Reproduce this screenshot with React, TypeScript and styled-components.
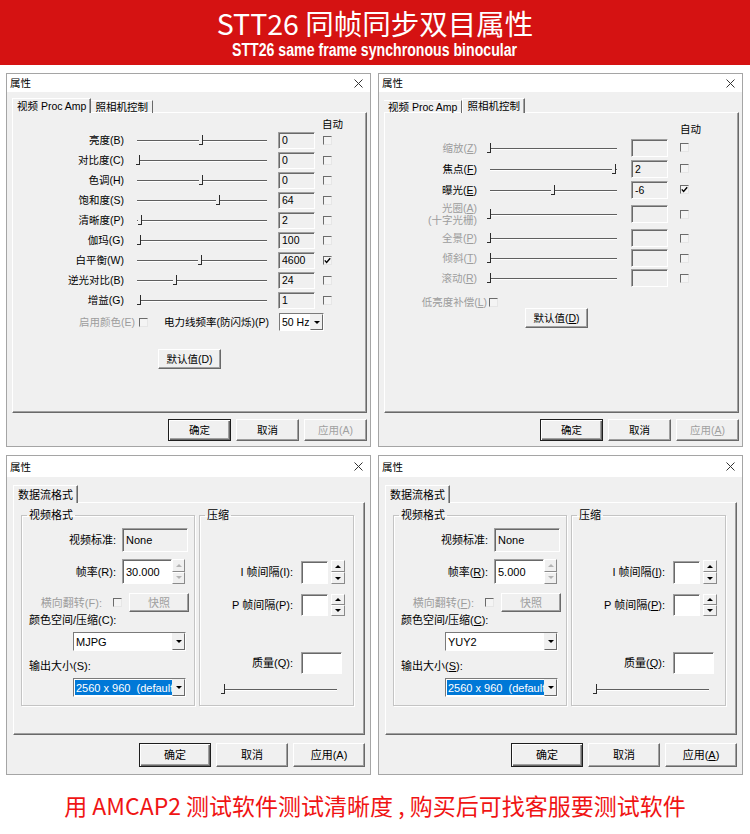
import React from "react";
import styled, { createGlobalStyle, css } from "styled-components";

const UI = `"Liberation Sans", "Noto Sans CJK SC", sans-serif`;
const CJK = `"Noto Sans CJK SC", sans-serif`;

const GlobalStyle = createGlobalStyle`
  html, body { margin: 0; padding: 0; background: #fff; }
  body { font-family: ${UI}; }
  *, *::before, *::after { box-sizing: border-box; }
`;

const Sheet = styled.div`
  display: flex;
  flex-direction: column;
  width: 750px;
  height: 834px;
  overflow: hidden;
  background: #fff;
`;

const Banner = styled.header`
  flex: none;
  height: 65px;
  display: flex;
  flex-direction: column;
  align-items: center;
  background: #d51212;
  color: #fff;
`;

const BannerTitle = styled.h1`
  margin: 8px 0 0;
  height: 30px;
  font: 400 28.5px/30px ${CJK};
  white-space: nowrap;
`;

const BannerSub = styled.div`
  margin-top: 4px;
  font: 700 18px/16px "Liberation Sans", sans-serif;
  white-space: nowrap;
  transform: scaleX(0.785);
`;

const Board = styled.main`
  flex: none;
  display: grid;
  grid-template-columns: 365px 365px;
  grid-template-rows: 374px 320px;
  column-gap: 7px;
  row-gap: 8px;
  padding: 8px 0 0 6px;
`;

const Footer = styled.footer`
  flex: 1;
  padding-top: 16px;
  text-align: center;
  color: #f01414;
  font: 400 23px/28px ${CJK};
  white-space: nowrap;
`;

/* ---- window chrome ---- */

const Window = styled.section<{ $fs: number }>`
  display: flex;
  flex-direction: column;
  min-height: 0;
  border: 1px solid #a5a5a5;
  background: #f0f0f0;
  color: #000;
  font: 400 ${(p) => p.$fs}px/12px ${UI};
`;

const TitleBar = styled.div<{ $h: number }>`
  flex: none;
  height: ${(p) => p.$h}px;
  display: flex;
  align-items: center;
  justify-content: space-between;
  padding: 0 7px 0 3px;
  background: #fff;
  font-size: 10.5px;
`;

const Body = styled.div<{ $pad: string }>`
  flex: 1;
  min-height: 0;
  display: flex;
  flex-direction: column;
  padding: ${(p) => p.$pad};
`;

const TabStrip = styled.div<{ $h: number }>`
  flex: none;
  height: ${(p) => p.$h}px;
  display: flex;
  align-items: flex-end;
  position: relative;
  z-index: 1;
  margin-bottom: -1px;
`;

const Tab = styled.div<{ $active?: boolean }>`
  display: flex;
  align-items: center;
  padding: 0 4px;
  white-space: nowrap;
  border-top: 1px solid #fff;
  border-right: 1px solid #696969;
  ${(p) =>
    p.$active
      ? css`
          height: 100%;
          background: #f0f0f0;
          border-left: 1px solid #fff;
          box-shadow: inset -1px 0 #a0a0a0;
        `
      : css`
          height: calc(100% - 2px);
        `}
`;

const Panel = styled.div<{ $pad?: string }>`
  flex: 1;
  min-height: 0;
  display: flex;
  flex-direction: column;
  padding: ${(p) => p.$pad || "0"};
  border-top: 1px solid #fff;
  border-left: 1px solid #fff;
  border-right: 1px solid #696969;
  border-bottom: 1px solid #696969;
  box-shadow: inset -1px -1px #a0a0a0;
`;

const ButtonRow = styled.div<{ $mt: number; $mb: number }>`
  flex: none;
  display: flex;
  justify-content: flex-end;
  gap: 5px;
  margin: ${(p) => p.$mt}px 0 ${(p) => p.$mb}px;
`;

const Button = styled.button<{ $w: number; $h: number; $ml?: number; $default?: boolean }>`
  appearance: none;
  flex: none;
  margin: 0 0 0 ${(p) => p.$ml || 0}px;
  padding: 0;
  width: ${(p) => p.$w}px;
  height: ${(p) => p.$h}px;
  font: inherit;
  color: #000;
  background: #f0f0f0;
  border: 1px solid;
  border-color: #fff #696969 #696969 #fff;
  box-shadow: inset -1px -1px #a0a0a0;
  &:disabled {
    color: #a0a0a0;
  }
  ${(p) =>
    p.$default &&
    css`
      border-color: #1e1e1e;
      box-shadow: inset 1px 1px #fff, inset -1px -1px #696969, inset -2px -2px #a0a0a0;
    `}
`;

/* ---- form controls ---- */

const Row = styled.div<{ $h: number; $mt?: number }>`
  flex: none;
  display: flex;
  align-items: center;
  height: ${(p) => p.$h}px;
  margin-top: ${(p) => p.$mt || 0}px;
`;

const Label = styled.div<{ $w: number; $dim?: boolean }>`
  flex: none;
  width: ${(p) => p.$w}px;
  text-align: right;
  white-space: pre-line;
  line-height: 12px;
  color: ${(p) => (p.$dim ? "#9d9d9d" : "#000")};
`;

const Caption = styled.div<{ $ml: number; $mt: number; $dim?: boolean }>`
  flex: none;
  height: 12px;
  margin: ${(p) => p.$mt}px 0 0 ${(p) => p.$ml}px;
  line-height: 12px;
  white-space: nowrap;
  color: ${(p) => (p.$dim ? "#9d9d9d" : "#000")};
`;

const Track = styled.div<{ $w: number; $ml: number }>`
  position: relative;
  flex: none;
  width: ${(p) => p.$w}px;
  height: 12px;
  margin-left: ${(p) => p.$ml}px;
  &::before {
    content: "";
    position: absolute;
    left: 0;
    right: 0;
    top: 6px;
    height: 1px;
    background: #5f5f5f;
    box-shadow: 0 1px #fff;
  }
`;

const Thumb = styled.span`
  position: absolute;
  top: 1px;
  width: 4px;
  height: 10px;
  margin-left: -4px;
  background: #f0f0f0;
  border-right: 1px solid #2c2c2c;
  border-bottom: 1px solid #2c2c2c;
`;

const Field = styled.div<{ $w: number; $h: number; $ml: number; $white?: boolean }>`
  flex: none;
  display: flex;
  align-items: center;
  width: ${(p) => p.$w}px;
  height: ${(p) => p.$h}px;
  margin-left: ${(p) => p.$ml}px;
  padding-left: 3px;
  white-space: nowrap;
  background: ${(p) => (p.$white ? "#fff" : "#f0f0f0")};
  border-top: 1px solid #a0a0a0;
  border-left: 1px solid #a0a0a0;
  border-right: 1px solid #fff;
  border-bottom: 1px solid #fff;
  box-shadow: inset 1px 1px #696969;
`;

const CheckBox = styled.span<{ $ml: number }>`
  flex: none;
  display: flex;
  align-items: center;
  justify-content: center;
  width: 9px;
  height: 9px;
  margin-left: ${(p) => p.$ml}px;
  background: #f4f4f4;
  border-top: 1px solid #6b6b6b;
  border-left: 1px solid #6b6b6b;
  border-right: 1px solid #e6e6e6;
  border-bottom: 1px solid #e6e6e6;
`;

const Combo = styled.div<{ $w: number; $h: number; $ml: number }>`
  flex: none;
  display: flex;
  width: ${(p) => p.$w}px;
  height: ${(p) => p.$h}px;
  margin-left: ${(p) => p.$ml}px;
  background: #fff;
  border-top: 1px solid #7a7a7a;
  border-left: 1px solid #7a7a7a;
  border-right: 1px solid #fff;
  border-bottom: 1px solid #fff;
`;

const ComboText = styled.div<{ $sel?: boolean }>`
  flex: 1;
  min-width: 0;
  display: flex;
  align-items: center;
  padding-left: 2px;
  overflow: hidden;
  white-space: pre;
  ${(p) =>
    p.$sel &&
    css`
      margin: 1px 0 1px 1px;
      padding-left: 1px;
      background: #0078d7;
      color: #fff;
    `}
`;

const arrow = (dir: "up" | "down", color: string) => css`
  &::after {
    content: "";
    border-left: 3px solid transparent;
    border-right: 3px solid transparent;
    ${dir === "up" ? `border-bottom: 3px solid ${color};` : `border-top: 3px solid ${color};`}
  }
`;

const DropButton = styled.div`
  flex: none;
  width: 13px;
  display: flex;
  align-items: center;
  justify-content: center;
  background: #f0f0f0;
  border: 1px solid;
  border-color: #f0f0f0 #696969 #696969 #f0f0f0;
  ${arrow("down", "#000")}
`;

const Spinner = styled.div<{ $w: number; $h: number; $ml: number }>`
  flex: none;
  display: flex;
  flex-direction: column;
  width: ${(p) => p.$w}px;
  height: ${(p) => p.$h}px;
  margin-left: ${(p) => p.$ml}px;
`;

const SpinHalf = styled.div<{ $up?: boolean; $off?: boolean }>`
  flex: 1;
  display: flex;
  align-items: center;
  justify-content: center;
  background: #f0f0f0;
  border: 1px solid;
  border-color: #fff #8a8a8a #8a8a8a #fff;
  ${(p) => arrow(p.$up ? "up" : "down", p.$off ? "#b4b4b4" : "#000")}
`;

const Center = styled.div<{ $mt: number }>`
  flex: none;
  display: flex;
  justify-content: center;
  margin-top: ${(p) => p.$mt}px;
`;

const GroupRow = styled.div`
  flex: none;
  display: flex;
  gap: 4px;
`;

const Group = styled.fieldset<{ $w: number }>`
  flex: none;
  display: flex;
  flex-direction: column;
  width: ${(p) => p.$w}px;
  min-width: 0;
  height: 197px;
  margin: 0;
  padding: 0;
  border: 1px solid #c4c4c4;
  box-shadow: inset 1px 1px #fff, 1px 1px #fff;
`;

const GroupTitle = styled.legend`
  margin-left: 5px;
  padding: 0 2px;
  line-height: 12px;
`;

const AccessKey = styled.span<{ $on: boolean }>`
  text-decoration: ${(p) => (p.$on ? "underline" : "none")};
`;

/* ---- little drawings ---- */

const CloseGlyph = () => (
  <svg width="9" height="9" viewBox="0 0 9 9">
    <path d="M0.5 0.5 L8.5 8.5 M8.5 0.5 L0.5 8.5" stroke="#333" strokeWidth="1" fill="none" />
  </svg>
);

const Tick = () => (
  <svg width="7" height="7" viewBox="0 0 7 7">
    <path d="M0.8 3.4 L2.6 5.4 L6.2 1.2" stroke="#000" strokeWidth="1.4" fill="none" />
  </svg>
);

const mnemonic = (text: string, on: boolean) => {
  const m = text.match(/^([\s\S]*\()([A-Z])(\)[\s\S]*)$/);
  if (!m) return text;
  return (
    <>
      {m[1]}
      <AccessKey $on={on}>{m[2]}</AccessKey>
      {m[3]}
    </>
  );
};

/* ---- dialog frame ---- */

type Metrics = {
  fs: number;
  titleH: number;
  pad: string;
  tabH: number;
  btnW: number;
  btnH: number;
  btnMt: number;
  btnMb: number;
};

const compactMetrics: Metrics = { fs: 10.5, titleH: 18, pad: "6px 3px 0 5px", tabH: 15, btnW: 63, btnH: 22, btnMt: 6, btnMb: 5 };
const tallMetrics: Metrics = { fs: 11, titleH: 21, pad: "8px 5px 0 6px", tabH: 18, btnW: 72, btnH: 24, btnMt: 8, btnMb: 7 };

type DialogProps = {
  tabs: string[];
  active: number;
  metrics: Metrics;
  keys: boolean;
  applyOn: boolean;
  panelPad?: string;
  children: React.ReactNode;
};

const PropertyDialog = ({ tabs, active, metrics: m, keys, applyOn, panelPad, children }: DialogProps) => (
  <Window $fs={m.fs}>
    <TitleBar $h={m.titleH}>
      <span>属性</span>
      <CloseGlyph />
    </TitleBar>
    <Body $pad={m.pad}>
      <TabStrip $h={m.tabH}>
        {tabs.map((t, i) => (
          <Tab key={t} $active={i === active}>
            {t}
          </Tab>
        ))}
      </TabStrip>
      <Panel $pad={panelPad}>{children}</Panel>
      <ButtonRow $mt={m.btnMt} $mb={m.btnMb}>
        <Button $w={m.btnW} $h={m.btnH} $default>
          确定
        </Button>
        <Button $w={m.btnW} $h={m.btnH}>
          取消
        </Button>
        <Button $w={m.btnW} $h={m.btnH} disabled={!applyOn}>
          {mnemonic("应用(A)", keys)}
        </Button>
      </ButtonRow>
    </Body>
  </Window>
);

/* ---- page: video proc amp ---- */

const ampRows = [
  { label: "亮度(B)", value: "0", pos: 51 },
  { label: "对比度(C)", value: "0", pos: 2 },
  { label: "色调(H)", value: "0", pos: 51 },
  { label: "饱和度(S)", value: "64", pos: 64 },
  { label: "清晰度(P)", value: "2", pos: 4 },
  { label: "伽玛(G)", value: "100", pos: 3 },
  { label: "白平衡(W)", value: "4600", pos: 50, auto: true },
  { label: "逆光对比(B)", value: "24", pos: 31 },
  { label: "增益(G)", value: "1", pos: 3 },
];

const ProcAmpPage = () => (
  <>
    <Caption $ml={309} $mt={5}>
      自动
    </Caption>
    {ampRows.map((r) => (
      <Row key={r.label} $h={20}>
        <Label $w={111}>{r.label}</Label>
        <Track $w={130} $ml={13}>
          <Thumb style={{ left: `${r.pos}%` }} />
        </Track>
        <Field $w={37} $h={17} $ml={11}>
          {r.value}
        </Field>
        <CheckBox $ml={8}>{r.auto && <Tick />}</CheckBox>
      </Row>
    ))}
    <Row $h={18} $mt={3}>
      <Label $w={122} $dim>
        启用颜色(E)
      </Label>
      <CheckBox $ml={4} />
      <Label $w={121}>电力线频率(防闪烁)(P)</Label>
      <Combo $w={45} $h={18} $ml={10}>
        <ComboText>50 Hz</ComboText>
        <DropButton />
      </Combo>
    </Row>
    <Center $mt={18}>
      <Button $w={63} $h={20}>
        默认值(D)
      </Button>
    </Center>
  </>
);

/* ---- page: camera control ---- */

const cameraRows = [
  { label: "缩放(Z)", value: "", pos: 1, h: 21, off: true },
  { label: "焦点(F)", value: "2", pos: 99, h: 21 },
  { label: "曝光(E)", value: "-6", pos: 51, h: 21, auto: true },
  { label: "光圈(A)\n(十字光栅)", value: "", pos: 1, h: 28, off: true },
  { label: "全景(P)", value: "", pos: 1, h: 20, off: true },
  { label: "倾斜(T)", value: "", pos: 1, h: 20, off: true },
  { label: "滚动(R)", value: "", pos: 1, h: 20, off: true },
];

const CameraPage = () => (
  <>
    <Caption $ml={295} $mt={10}>
      自动
    </Caption>
    {cameraRows.map((r, i) => (
      <Row key={r.label} $h={r.h} $mt={i === 0 ? 2 : 0}>
        <Label $w={92} $dim={r.off}>
          {mnemonic(r.label, true)}
        </Label>
        <Track $w={127} $ml={13}>
          <Thumb style={{ left: `${r.pos}%` }} />
        </Track>
        <Field $w={37} $h={18} $ml={14}>
          {r.value}
        </Field>
        <CheckBox $ml={12}>{r.auto && <Tick />}</CheckBox>
      </Row>
    ))}
    <Row $h={12} $mt={8}>
      <Label $w={102} $dim>
        {mnemonic("低亮度补偿(L)", true)}
      </Label>
      <CheckBox $ml={2} />
    </Row>
    <Row $h={20}>
      <Button $w={63} $h={20} $ml={140}>
        {mnemonic("默认值(D)", true)}
      </Button>
    </Row>
  </>
);

/* ---- page: stream format ---- */

type StreamProps = { rate: string; codec: string; keys: boolean };

const StreamPage = ({ rate, codec, keys }: StreamProps) => (
  <GroupRow>
    <Group $w={174}>
      <GroupTitle>视频格式</GroupTitle>
      <Row $h={24} $mt={7}>
        <Label $w={94}>视频标准:</Label>
        <Field $w={66} $h={24} $ml={6}>
          None
        </Field>
      </Row>
      <Row $h={25} $mt={7}>
        <Label $w={94}>{mnemonic("帧率(R):", keys)}</Label>
        <Field $w={50} $h={25} $ml={6} $white>
          {rate}
        </Field>
        <Spinner $w={13} $h={25} $ml={0}>
          <SpinHalf $up $off />
          <SpinHalf $off />
        </Spinner>
      </Row>
      <Row $h={19} $mt={9}>
        <Label $w={80} $dim>
          {mnemonic("横向翻转(F):", keys)}
        </Label>
        <CheckBox $ml={11} />
        <Button $w={60} $h={19} $ml={7} disabled>
          快照
        </Button>
      </Row>
      <Caption $ml={7} $mt={2}>
        {mnemonic("颜色空间/压缩(C):", keys)}
      </Caption>
      <Row $h={19} $mt={6}>
        <Combo $w={113} $h={19} $ml={51}>
          <ComboText>{codec}</ComboText>
          <DropButton />
        </Combo>
      </Row>
      <Caption $ml={7} $mt={9}>
        {mnemonic("输出大小(S):", keys)}
      </Caption>
      <Row $h={19} $mt={6}>
        <Combo $w={113} $h={19} $ml={51}>
          <ComboText $sel>2560 x 960  (default</ComboText>
          <DropButton />
        </Combo>
      </Row>
    </Group>
    <Group $w={155}>
      <GroupTitle>压缩</GroupTitle>
      <Row $h={24} $mt={39}>
        <Label $w={93}>{mnemonic("I 帧间隔(I):", keys)}</Label>
        <Field $w={27} $h={23} $ml={8} $white />
        <Spinner $w={14} $h={24} $ml={3}>
          <SpinHalf $up />
          <SpinHalf />
        </Spinner>
      </Row>
      <Row $h={22} $mt={10}>
        <Label $w={93}>{mnemonic("P 帧间隔(P):", keys)}</Label>
        <Field $w={27} $h={22} $ml={8} $white />
        <Spinner $w={14} $h={22} $ml={3}>
          <SpinHalf $up />
          <SpinHalf />
        </Spinner>
      </Row>
      <Row $h={22} $mt={36}>
        <Label $w={93}>{mnemonic("质量(Q):", keys)}</Label>
        <Field $w={41} $h={22} $ml={8} $white />
      </Row>
      <Row $h={12} $mt={9}>
        <Track $w={115} $ml={22}>
          <Thumb style={{ left: "3%" }} />
        </Track>
      </Row>
    </Group>
  </GroupRow>
);

export default function App() {
  return (
    <Sheet>
      <GlobalStyle />
      <Banner>
        <BannerTitle>STT26 同帧同步双目属性</BannerTitle>
        <BannerSub>STT26 same frame synchronous binocular</BannerSub>
      </Banner>
      <Board>
        <PropertyDialog tabs={["视频 Proc Amp", "照相机控制"]} active={0} metrics={compactMetrics} keys={false} applyOn={false}>
          <ProcAmpPage />
        </PropertyDialog>
        <PropertyDialog tabs={["视频 Proc Amp", "照相机控制"]} active={1} metrics={compactMetrics} keys applyOn={false}>
          <CameraPage />
        </PropertyDialog>
        <PropertyDialog tabs={["数据流格式"]} active={0} metrics={tallMetrics} keys={false} applyOn panelPad="6px 0 0 7px">
          <StreamPage rate="30.000" codec="MJPG" keys={false} />
        </PropertyDialog>
        <PropertyDialog tabs={["数据流格式"]} active={0} metrics={tallMetrics} keys applyOn panelPad="6px 0 0 7px">
          <StreamPage rate="5.000" codec="YUY2" keys />
        </PropertyDialog>
      </Board>
      <Footer>用 AMCAP2 测试软件测试清晰度 , 购买后可找客服要测试软件</Footer>
    </Sheet>
  );
}
